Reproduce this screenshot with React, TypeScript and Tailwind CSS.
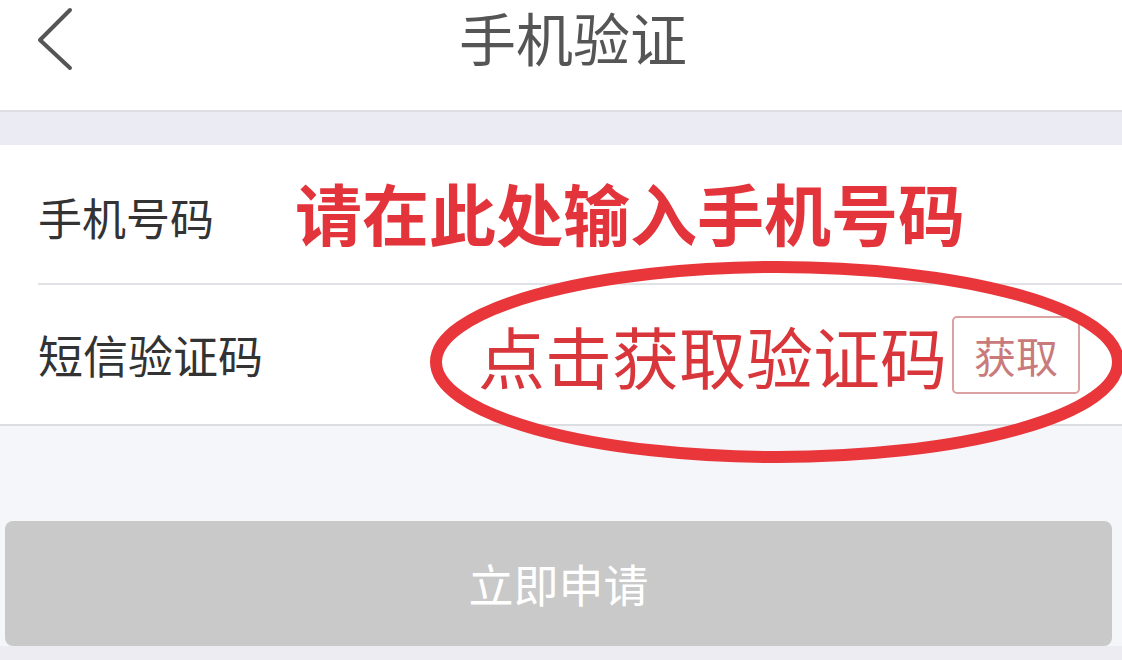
import React from "react";

const font = { fontFamily: '"Noto Sans CJK SC", "Noto Sans", sans-serif' };

const App: React.FC = () => {
  return (
    <div style={font} className="relative w-[1122px] h-[660px] overflow-hidden bg-[#f4f6f9]">
      {/* Header */}
      <header className="relative h-[112px] bg-white border-b-2 border-[#dedfe3] flex items-start justify-center">
        <svg className="absolute left-[34px] top-[4px]" width="44" height="68" viewBox="0 0 44 68">
          <path d="M36 6 L6 36 L36 64" fill="none" stroke="#555" strokeWidth="4" strokeLinecap="round" strokeLinejoin="round" />
        </svg>
        <h1 className="ml-[24px] text-[57px] leading-[72px] whitespace-nowrap text-[#555]">手机验证</h1>
      </header>

      {/* Band */}
      <div className="h-[33px] bg-[#ebebf3]" />

      {/* Form */}
      <section className="bg-white">
        <div className="h-[138px] flex items-center pl-[38px] pt-[6px]">
          <span className="w-[257px] text-[44px] leading-none text-[#333]">手机号码</span>
          <span className="mb-[12px] text-[67px] leading-none font-bold text-[#e2343a]">请在此处输入手机号码</span>
        </div>
        <div className="ml-[38px] h-[2px] bg-[#e1e2e6]" />
        <div className="h-[139px] flex items-center pl-[38px]">
          <span className="w-[440px] text-[45px] leading-none text-[#333]">短信验证码</span>
          <span className="text-[67px] leading-none text-[#d8363a]">点击获取验证码</span>
          <button className="ml-[5px] w-[128px] h-[78px] border-2 border-[#dba0a0] rounded-[5px] text-[42px] leading-none text-[#c97a7a]">
            获取
          </button>
        </div>
      </section>
      <div className="h-[2px] bg-[#dcdde1]" />

      {/* Submit */}
      <div className="pt-[95px] pl-[5px] pr-[10px]">
        <button className="w-full h-[125px] rounded-[8px] bg-[#c9c9c9] text-[45px] leading-none text-white">
          立即申请
        </button>
      </div>
      <div className="absolute left-0 right-0 bottom-0 h-[14px] bg-[#edecf3]" />

      {/* Annotation ellipse */}
      <svg className="absolute left-0 top-0 pointer-events-none" width="1122" height="660" viewBox="0 0 1122 660">
        <ellipse cx="777" cy="362" rx="341" ry="95" fill="none" stroke="#e8363a" strokeWidth="12" />
      </svg>
    </div>
  );
};

export default App;
